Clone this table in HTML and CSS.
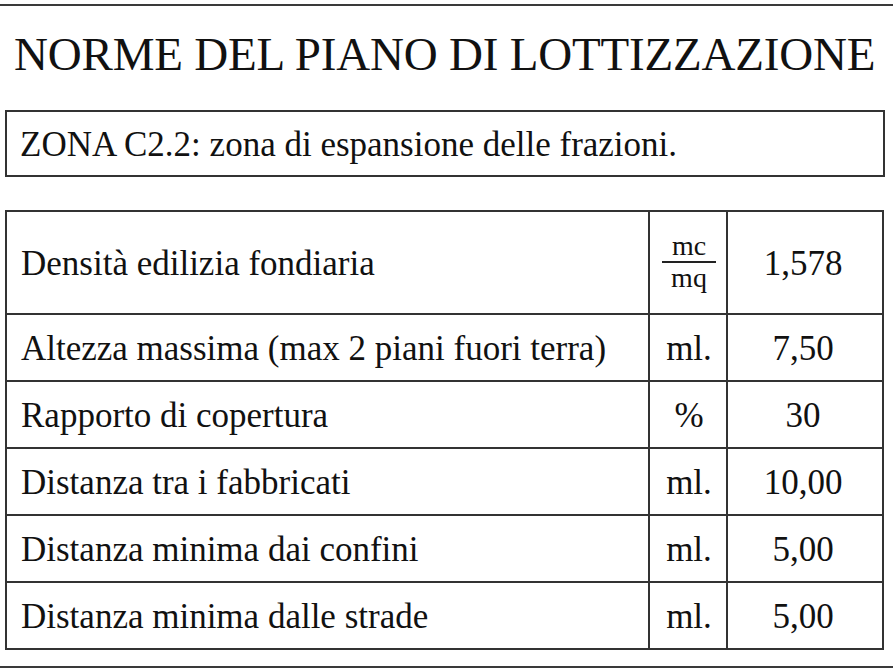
FILE: index.html
```html
<!DOCTYPE html>
<html lang="it">
<head>
<meta charset="utf-8">
<title>Norme del piano di lottizzazione</title>
<link rel="stylesheet" href="styles.css">
</head>
<body>
<div class="page">
  <div class="rule rule-top"></div>
  <h1 class="title">NORME DEL PIANO DI LOTTIZZAZIONE</h1>
  <div class="zona">ZONA C2.2: zona di espansione delle frazioni.</div>
  <div class="norme">
    <div class="cell label">Densità edilizia fondiaria</div>
    <div class="cell unit">
      <span class="frac"><span class="num">mc</span><span class="bar"></span><span class="den">mq</span></span>
    </div>
    <div class="cell value">1,578</div>

    <div class="cell label">Altezza massima (max 2 piani fuori terra)</div>
    <div class="cell unit">ml.</div>
    <div class="cell value">7,50</div>

    <div class="cell label">Rapporto di copertura</div>
    <div class="cell unit">%</div>
    <div class="cell value">30</div>

    <div class="cell label">Distanza tra i fabbricati</div>
    <div class="cell unit">ml.</div>
    <div class="cell value">10,00</div>

    <div class="cell label">Distanza minima dai confini</div>
    <div class="cell unit">ml.</div>
    <div class="cell value">5,00</div>

    <div class="cell label">Distanza minima dalle strade</div>
    <div class="cell unit">ml.</div>
    <div class="cell value">5,00</div>
  </div>
  <div class="rule rule-bottom"></div>
</div>
</body>
</html>
```
FILE: styles.css
```css
html, body {
  margin: 0;
  padding: 0;
  background: #ffffff;
}

body {
  font-family: "Liberation Serif", "Times New Roman", serif;
  color: #111111;
}

.page {
  width: 893px;
  height: 670px;
  overflow: hidden;
}

.rule {
  height: 2px;
  background: #3a3a3a;
}

.rule-top {
  margin-top: 4px;
}

.rule-bottom {
  margin-top: 16px;
}

.title {
  margin: 21px 0 0 0;
  padding-left: 14px;
  font-size: 47px;
  font-weight: normal;
  letter-spacing: -0.2px;
  line-height: 54px;
  white-space: nowrap;
}

.zona {
  box-sizing: border-box;
  margin: 29px 8px 0 5px;
  height: 67px;
  border: 2px solid #333333;
  padding: 3px 0 0 13px;
  display: flex;
  align-items: center;
  font-size: 35px;
  white-space: nowrap;
}

.norme {
  box-sizing: border-box;
  margin: 33px 0 0 5px;
  width: 879px;
  display: grid;
  grid-template-columns: 643px 78px 156px;
  grid-template-rows: 103px repeat(5, 67px);
  border-left: 2px solid #333333;
  border-top: 2px solid #333333;
}

.cell {
  box-sizing: border-box;
  border-right: 2px solid #333333;
  border-bottom: 2px solid #333333;
  display: flex;
  align-items: center;
  padding-top: 3px;
  font-size: 35px;
  white-space: nowrap;
}

.label {
  padding-left: 14px;
}

.unit,
.value {
  justify-content: center;
}

.unit {
  padding-left: 2px;
}

.value {
  padding-right: 4px;
}

.frac {
  display: flex;
  flex-direction: column;
  align-items: center;
  font-size: 28px;
  line-height: 30px;
  margin-top: -5px;
}

.frac .num,
.frac .den {
  display: block;
}

.frac .bar {
  display: block;
  width: 54px;
  height: 2px;
  background: #222222;
}
```
